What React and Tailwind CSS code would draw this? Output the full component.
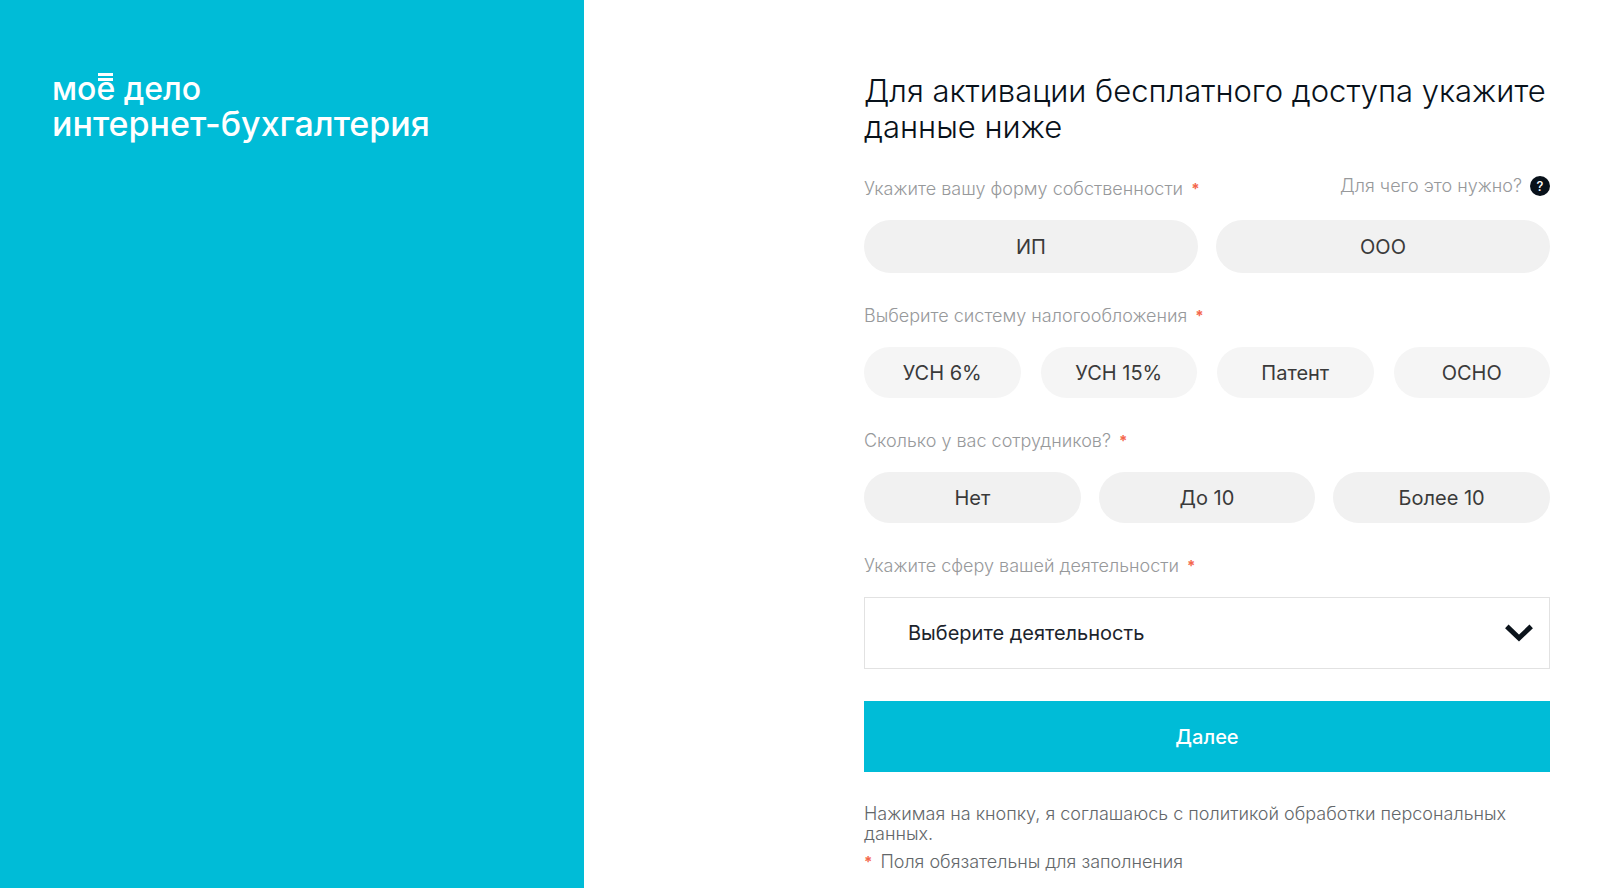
import { useState } from "react";

const QUESTIONS = [
  {
    id: "ownership",
    label: "Укажите вашу форму собственности",
    options: ["ИП", "ООО"],
    grid: "grid-cols-2 gap-[18px]",
    pill: "h-[53px] bg-[#f1f1f1]",
    hasHelp: true,
  },
  {
    id: "tax",
    label: "Выберите систему налогообложения",
    options: ["УСН 6%", "УСН 15%", "Патент", "ОСНО"],
    grid: "grid-cols-4 gap-5",
    pill: "h-[51px] bg-[#f5f5f5]",
  },
  {
    id: "employees",
    label: "Сколько у вас сотрудников?",
    options: ["Нет", "До 10", "Более 10"],
    grid: "grid-cols-3 gap-[18px]",
    pill: "h-[51px] bg-[#f1f1f1]",
  },
];

function Required() {
  return <span className="text-[15px] font-bold text-[#f4674c]">*</span>;
}

function Logo() {
  return (
    <div className="leading-[35px] font-medium text-white">
      <div className="text-[32px]">
        мо
        <span className="relative">
          е
          <span className="absolute inset-x-[2px] top-1 h-2 border-y-[3px] border-white" />
        </span>{" "}
        дело
      </div>
      <div className="text-[34px]">интернет-бухгалтерия</div>
    </div>
  );
}

function Question({ question, value, onChange }) {
  return (
    <div role="group" aria-labelledby={question.id}>
      <div className="flex items-start justify-between text-[18px] leading-6 font-light text-[#97999b]">
        <span id={question.id} className="flex gap-2">
          {question.label}
          <Required />
        </span>
        {question.hasHelp && (
          <button type="button" className="-mt-[3px] flex items-center gap-2">
            Для чего это нужно?
            <span className="flex size-5 items-center justify-center rounded-full bg-[#08111a] text-[13px] font-medium text-white">
              ?
            </span>
          </button>
        )}
      </div>
      <div className={`mt-[19px] grid ${question.grid}`}>
        {question.options.map((option) => (
          <button
            key={option}
            type="button"
            aria-pressed={value === option}
            onClick={() => onChange(option)}
            className={`rounded-full text-[20px] text-[#3a3a3a] aria-pressed:bg-[#00bcd7] aria-pressed:text-white ${question.pill}`}
          >
            {option}
          </button>
        ))}
      </div>
    </div>
  );
}

export default function App() {
  const [answers, setAnswers] = useState({});

  return (
    <div className="flex min-h-screen bg-white font-['Inter','Liberation_Sans',sans-serif]">
      <aside className="w-[36.5%] shrink-0 bg-[#00bcd7] px-[52px] pt-[71px]">
        <Logo />
      </aside>

      <main className="flex-1 pt-[73px] pr-[50px] pl-[280px]">
        <form onSubmit={(e) => e.preventDefault()}>
          <h1 className="text-[31px] leading-9 font-light text-[#08111a]">
            Для активации бесплатного доступа укажите данные ниже
          </h1>

          <div className="mt-8 flex flex-col gap-[31px]">
            {QUESTIONS.map((question) => (
              <Question
                key={question.id}
                question={question}
                value={answers[question.id]}
                onChange={(option) => setAnswers({ ...answers, [question.id]: option })}
              />
            ))}

            <div>
              <label
                htmlFor="activity"
                className="flex gap-2 text-[18px] leading-6 font-light text-[#97999b]"
              >
                Укажите сферу вашей деятельности
                <Required />
              </label>
              <div className="mt-[19px] grid items-center">
                <select
                  id="activity"
                  className="col-start-1 row-start-1 h-[72px] w-full appearance-none border border-[#e2e2e2] bg-white px-[43px] text-[20px] text-[#1c242c]"
                >
                  <option>Выберите деятельность</option>
                </select>
                <svg
                  viewBox="0 0 28 18"
                  className="pointer-events-none col-start-1 row-start-1 mr-[17px] h-[18px] w-7 justify-self-end"
                  fill="none"
                  stroke="#0b131b"
                  strokeWidth="5"
                >
                  <path d="M1.8 2.4 14 14 26.2 2.4" />
                </svg>
              </div>
            </div>
          </div>

          <button
            type="submit"
            className="mt-8 h-[71px] w-full bg-[#00bcd7] text-[20px] font-medium text-white"
          >
            Далее
          </button>

          <div className="mt-8 text-[18px] leading-5 font-light text-[#63676a]">
            <p>Нажимая на кнопку, я соглашаюсь с политикой обработки персональных данных.</p>
            <p className="mt-2 flex gap-2">
              <Required />
              Поля обязательны для заполнения
            </p>
          </div>
        </form>
      </main>
    </div>
  );
}
